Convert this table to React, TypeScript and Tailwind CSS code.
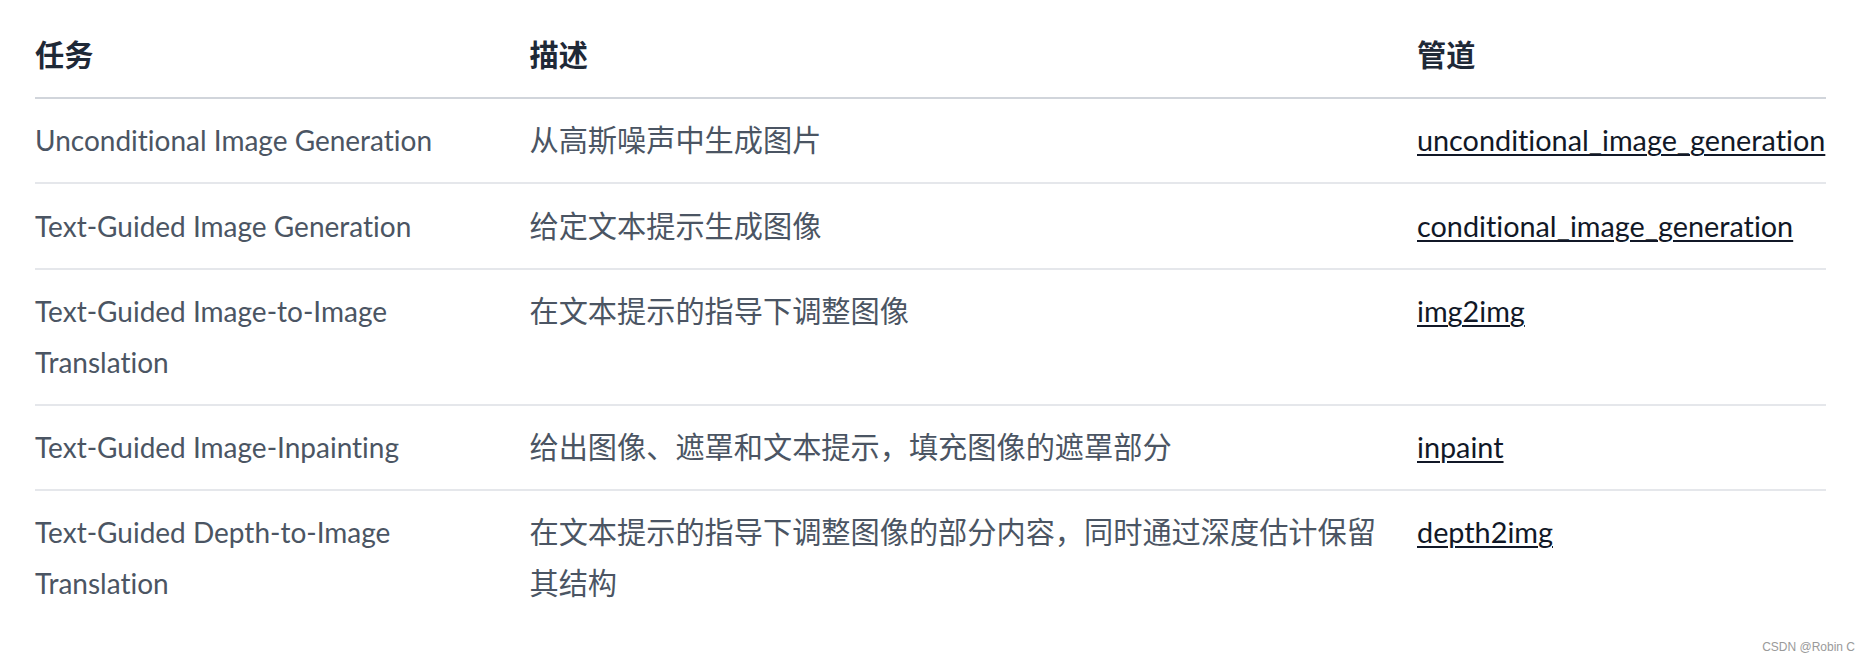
const rows = [
  {
    task: "Unconditional Image Generation",
    desc: "从高斯噪声中生成图片",
    pipe: "unconditional_image_generation",
  },
  {
    task: "Text-Guided Image Generation",
    desc: "给定文本提示生成图像",
    pipe: "conditional_image_generation",
  },
  {
    task: "Text-Guided Image-to-Image Translation",
    desc: "在文本提示的指导下调整图像",
    pipe: "img2img",
  },
  {
    task: "Text-Guided Image-Inpainting",
    desc: "给出图像、遮罩和文本提示，填充图像的遮罩部分",
    pipe: "inpaint",
  },
  {
    task: "Text-Guided Depth-to-Image Translation",
    desc: "在文本提示的指导下调整图像的部分内容，同时通过深度估计保留其结构",
    pipe: "depth2img",
  },
];

const font = "font-['Lato','Noto_Sans_CJK_SC',sans-serif] [font-variant-ligatures:none]";

export default function App() {
  return (
    <div className={`relative h-[664px] w-[1870px] bg-white ${font}`}>
      <div className="ml-[35px] w-[1791px] pt-[30px]">
        <div className="grid grid-cols-[478px_887.5px_425.5px] border-b-2 border-[#d1d5db] text-[29.2px] font-bold leading-[50.4px] text-[#1f2937]">
          <div className="pb-[16.5px] pr-[16.5px]">任务</div>
          <div className="px-[16.5px] pb-[16.5px]">描述</div>
          <div className="pb-[16.5px] pl-[16.5px]">管道</div>
        </div>

        {rows.map((r, i) => (
          <div
            key={r.pipe}
            className={`grid grid-cols-[478px_887.5px_425.5px] leading-[50.4px] ${
              i < rows.length - 1 ? "border-b-2 border-[#e5e7eb]" : ""
            }`}
          >
            <div className="py-[16.5px] pr-[16.5px] text-[28px] text-[#4b5563]">
              {r.task}
            </div>
            <div className="px-[16.5px] py-[16.5px] text-[29.2px] text-[#4b5563]">
              {r.desc}
            </div>
            <div className="py-[16.5px] pl-[16.5px] text-[28.8px]">
              <a
                href="#"
                className="text-[#111827] underline decoration-[2px] underline-offset-[3px]"
              >
                {r.pipe}
              </a>
            </div>
          </div>
        ))}
      </div>

      <div className="absolute bottom-[8px] right-[15px] font-['Liberation_Sans',sans-serif] text-[12px] text-[#9a9a9a]">
        CSDN @Robin C
      </div>
    </div>
  );
}
